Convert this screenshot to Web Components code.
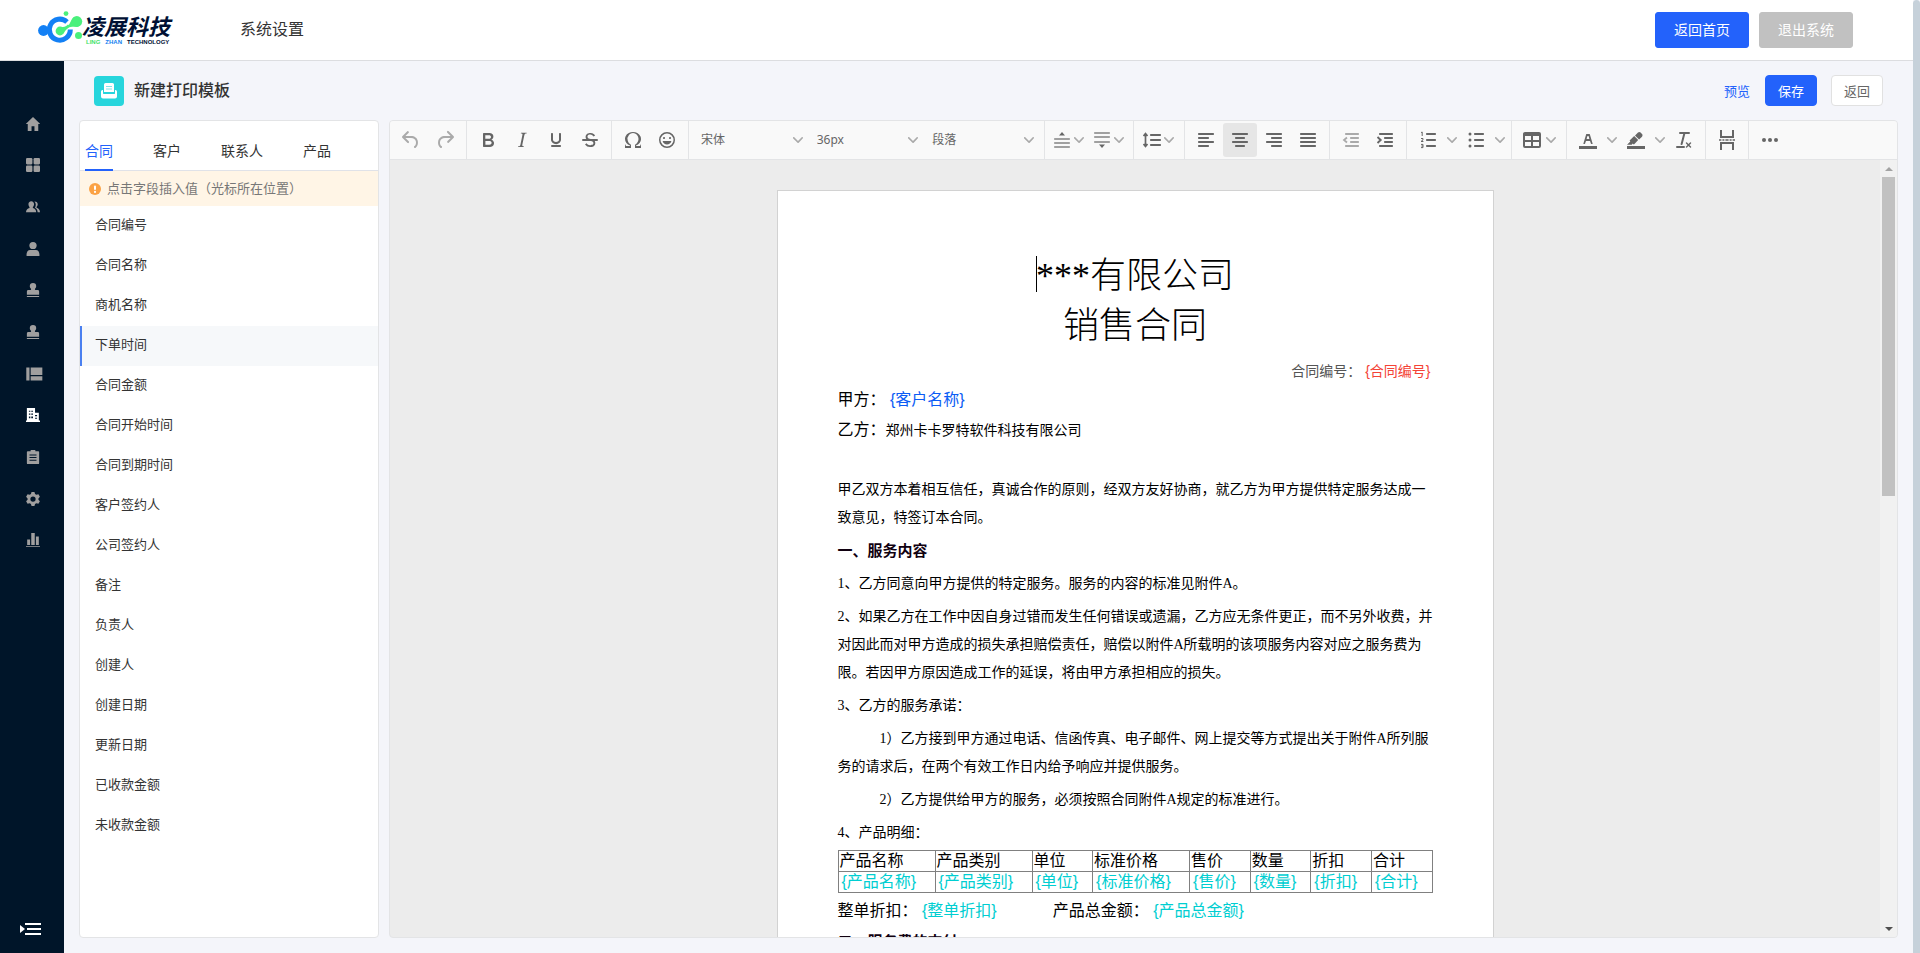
<!DOCTYPE html>
<html lang="zh-CN">
<head>
<meta charset="utf-8">
<title>新建打印模板</title>
<meta name="viewport" content="width=device-width, initial-scale=1">
<style>
  html, body { margin: 0; height: 100%; }
  body {
    font-family: "Noto Sans CJK SC", sans-serif;
    font-size: 13px;
    color: #333;
    background: #f4f5fa;
    overflow: hidden;
    --blue: #2362fb;
    --line: #e3e4e6;
  }
</style>
</head>
<body>
<print-template-app></print-template-app>

<script>
const define = (name, html, setup) => {
  const tpl = document.createElement('template');
  tpl.innerHTML = html;
  customElements.define(name, class extends HTMLElement {
    connectedCallback() {
      if (this.shadowRoot) return;
      this.attachShadow({ mode: 'open' }).append(tpl.content.cloneNode(true));
      if (setup) setup.call(this, this.shadowRoot);
    }
  });
};

/* ---------- icons ---------- */
const bar = (x, y, w) => `<rect x="${x}" y="${y - 1}" width="${w}" height="2" rx=".8"/>`;
const ICONS = {
  undo: '<path d="M6.4 8H12c3.7 0 6.2 2 6.8 5.1.6 2.7-.4 5.6-2.3 6.8a1 1 0 01-1-1.8c1.1-.6 1.8-2.7 1.4-4.6-.5-2.1-2.1-3.5-4.9-3.5H6.4l3.3 3.3a1 1 0 11-1.4 1.4l-5-5a1 1 0 010-1.4l5-5a1 1 0 011.4 1.4L6.4 8z"/>',
  redo: '<path d="M17.6 10H12c-2.8 0-4.4 1.4-4.9 3.5-.4 2 .3 4 1.4 4.6a1 1 0 11-1 1.8c-2-1.2-2.9-4.1-2.3-6.8.6-3 3-5.1 6.8-5.1h5.6l-3.3-3.3a1 1 0 111.4-1.4l5 5a1 1 0 010 1.4l-5 5a1 1 0 01-1.4-1.4l3.3-3.3z"/>',
  bold: '<path d="M7.8 19c-.3 0-.5 0-.6-.2l-.2-.5V5.7c0-.2 0-.4.2-.5l.6-.2h5c1.5 0 2.7.3 3.5 1 .7.6 1.1 1.4 1.1 2.5a3 3 0 01-.6 1.9c-.4.6-1 1-1.6 1.2.4.1.9.3 1.3.6s.8.7 1 1.2c.4.4.5 1 .5 1.6 0 1.3-.4 2.3-1.3 3-.8.7-2.1 1-3.8 1H7.8zm5-8.3c.6 0 1.2-.1 1.6-.5.4-.3.6-.7.6-1.3 0-1.1-.8-1.7-2.3-1.7H9.3v3.5h3.4zm.5 6c.7 0 1.3-.1 1.7-.4.4-.4.6-.9.6-1.5s-.2-1-.7-1.4c-.4-.3-1-.4-2-.4H9.4v3.8h4z"/>',
  italic: '<path d="M16.7 4.7l-.1.9h-.3c-.6 0-1 0-1.4.3-.3.3-.4.6-.5 1.1l-2.1 9.8v.6c0 .5.4.8 1.4.8h.2l-.2.8H8l.2-.8h.2c1.1 0 1.8-.5 2-1.5l2-9.8.1-.5c0-.6-.4-.8-1.4-.8h-.3l.2-.9h5.8z"/>',
  underline: '<path d="M16 5c.6 0 1 .4 1 1v5.5a4 4 0 01-.4 1.8l-1 1.4a5.3 5.3 0 01-5.5 1 5 5 0 01-1.6-1c-.5-.4-.8-.9-1.1-1.4a4 4 0 01-.4-1.8V6c0-.6.4-1 1-1s1 .4 1 1v5.5c0 .3 0 .6.2 1l.6.7a3.3 3.3 0 002.2.8 3.4 3.4 0 002.2-.8c.3-.2.4-.5.6-.8l.2-.9V6c0-.6.4-1 1-1zM8 17h8c.6 0 1 .4 1 1s-.4 1-1 1H8a1 1 0 010-2z"/>',
  strike: '<path d="M15.6 8.5c-.5-.7-1-1.1-1.3-1.3-.6-.4-1.3-.6-2-.6-2.7 0-2.8 1.7-2.8 2.1 0 1.6 1.8 2 3.2 2.3 4.4.9 4.6 2.8 4.6 3.9 0 1.4-.7 4.1-5 4.1A6.2 6.2 0 017 16.4l1.5-1.1c.4.6 1.6 2 3.7 2 1.6 0 2.5-.4 3-1.2.4-.8.3-2-.8-2.6-.7-.4-1.6-.7-2.9-1-1-.2-3.9-.8-3.9-3.6C7.6 6 10.3 5 12.4 5c2.9 0 4.2 1.6 4.7 2.4l-1.5 1.1z"/><path d="M5 11h14a1 1 0 010 2H5a1 1 0 010-2z"/>',
  omega: '<path d="M15 18h4l1-2v4h-6v-3.3l1.4-1a6 6 0 001.8-2.9 6.3 6.3 0 00-.1-4.1 5.8 5.8 0 00-3-3.2c-.6-.3-1.3-.5-2.1-.5a5.1 5.1 0 00-3.9 1.8 6.3 6.3 0 00-1.3 6 6.2 6.2 0 001.8 3l1.4.9V20H4v-4l1 2h4v-.5l-2-1L5.4 15A6.5 6.5 0 014 11c0-1 .2-1.9.6-2.7A7 7 0 017.8 5C9 4.3 10.5 4 12 4c1.7 0 3 .4 4.3 1a7 7 0 013.1 3.3c.4.8.6 1.7.6 2.7 0 1.5-.5 2.8-1.4 4L17 16.5l-2 1v.5z"/>',
  emoji: '<path d="M9 11c.6 0 1-.4 1-1s-.4-1-1-1a1 1 0 00-1 1c0 .6.4 1 1 1zm6 0c.6 0 1-.4 1-1s-.4-1-1-1a1 1 0 00-1 1c0 .6.4 1 1 1zm-3 5.5c2.1 0 4-1.5 4.4-3.5H7.6c.5 2 2.3 3.5 4.4 3.5zM12 4a8 8 0 100 16 8 8 0 000-16zm0 14.5a6.5 6.5 0 110-13 6.5 6.5 0 010 13z"/>',
  before: '<g opacity=".6">' + bar(4, 11, 16) + bar(4, 15, 16) + bar(4, 19, 16) + '</g><path d="M12 4l3 3.6H9z"/>',
  after: '<g opacity=".6">' + bar(4, 5, 16) + bar(4, 9, 16) + bar(4, 14, 16) + '</g><path d="M12 20l3-3.6H9z"/>',
  lineheight: bar(10, 7, 11) + bar(10, 12, 11) + bar(10, 17, 11) + '<path d="M5.5 7v10M3.5 8l2-2.5 2 2.5M3.5 16l2 2.5 2-2.5" fill="none" stroke="currentColor" stroke-width="1.7"/>',
  left: bar(4, 6, 16) + bar(4, 10, 11) + bar(4, 14, 16) + bar(4, 18, 11),
  center: bar(4, 6, 16) + bar(7, 10, 10) + bar(4, 14, 16) + bar(7, 18, 10),
  right: bar(4, 6, 16) + bar(9, 10, 11) + bar(4, 14, 16) + bar(9, 18, 11),
  justify: bar(4, 6, 16) + bar(4, 10, 16) + bar(4, 14, 16) + bar(4, 18, 16),
  outdent: bar(6, 6, 14) + bar(11, 10, 9) + bar(11, 14, 9) + bar(6, 18, 14) + '<path d="M8 9.5L5 12l3 2.5" fill="none" stroke="currentColor" stroke-width="1.8"/>',
  indent: bar(6, 6, 14) + bar(11, 10, 9) + bar(11, 14, 9) + bar(6, 18, 14) + '<path d="M4.5 9l3.2 3-3.2 3" fill="none" stroke="currentColor" stroke-width="1.9"/>',
  ol: bar(10, 6, 10) + bar(10, 12, 10) + bar(10, 18, 10) + '<path d="M5 4.6l1.2-.6v4M5 10.5h2v1.3L5 13.5h2.4M5 16.4h2v3.2H5M5.4 18H7" fill="none" stroke="currentColor" stroke-width="1"/>',
  ul: bar(10, 6, 10) + bar(10, 12, 10) + bar(10, 18, 10) + '<circle cx="6" cy="6" r="1.5"/><circle cx="6" cy="12" r="1.5"/><circle cx="6" cy="18" r="1.5"/>',
  table: '<path d="M19 4a2 2 0 012 2v12a2 2 0 01-2 2H5a2 2 0 01-2-2V6c0-1.1.9-2 2-2h14zM5 14v4h6v-4H5zm14 0h-6v4h6v-4zm0-6h-6v4h6V8zM5 12h6V8H5v4z"/>',
  forecolor: '<path d="M3 18h18v3H3zM8.7 16h-.8a.5.5 0 01-.5-.6l2.7-9c.1-.3.3-.4.5-.4h2.8c.2 0 .4.1.5.4l2.7 9a.5.5 0 01-.5.6h-.8a.5.5 0 01-.4-.4l-.7-2.2c0-.3-.3-.4-.5-.4h-3.4c-.2 0-.4.1-.5.4l-.7 2.2c0 .3-.2.4-.4.4zm2.6-7.6l-.6 2a.5.5 0 00.5.6h1.6a.5.5 0 00.5-.6l-.6-2c0-.3-.3-.4-.5-.4h-.4c-.2 0-.4.1-.5.4z"/>',
  backcolor: '<path d="M3 18h18v3H3zM7.7 16.7H3l3.3-3.3-.7-.8L10.2 8l4 4.1-4 4.2c-.2.2-.6.2-.8 0l-.6-.7-1.1 1.1zm5-7.5L11 7.4l3-2.9a2 2 0 012.6 0L18 6c.7.7.7 2 0 2.7l-2.9 2.9-1.8-1.8-.6-.6z"/>',
  clear: '<path d="M13.2 6a1 1 0 010 .2l-2.6 10a1 1 0 01-1 .8h-.2a.8.8 0 01-.8-1l2.6-10H8a1 1 0 110-2h9a1 1 0 010 2h-3.8zM5 18h7a1 1 0 010 2H5a1 1 0 010-2zm13 1.5L16.5 18 15 19.5a.7.7 0 01-1-1l1.5-1.5-1.5-1.5a.7.7 0 011-1l1.5 1.5 1.5-1.5a.7.7 0 011 1L17.5 17l1.5 1.5a.7.7 0 01-1 1z"/>',
  pagebreak: '<path d="M6 2v7h12V2M6 22v-7h12v7" fill="none" stroke="currentColor" stroke-width="2"/><path d="M4 11.2h2.4v1.6H4zM7.4 11.2h2v1.6h-2zM10.4 11.2h3.2v1.6h-3.2zM14.6 11.2h2v1.6h-2zM17.6 11.2H20v1.6h-2.4z"/>',
  more: '<circle cx="6" cy="12" r="2"/><circle cx="12" cy="12" r="2"/><circle cx="18" cy="12" r="2"/>',
  home: '<path d="M12 0L0 11.500V12h3v12h6.500v-8h5v8H21V12h3v-.5z"/>',
  grid: '<rect width="11" height="11" rx="2"/><rect x="13" width="11" height="11" rx="2"/><rect y="13" width="11" height="11" rx="2"/><rect x="13" y="13" width="11" height="11" rx="2"/>',
  people: '<path d="M9 2c3 0 4.8 2.300 4.800 5.200 0 2-.9 3.600-2 4.700v1.700c3.500 1 5.700 3 5.700 7.400H0c0-4.400 2.500-6.400 6-7.400v-1.700C5 10.800 4.200 9.200 4.200 7.200 4.200 4.300 6 2 9 2z"/><path d="M14.500 2.500c4 0 5.600 2 5.600 4.800 0 2-.8 3.400-2 4.500v1.500c3.400.8 5.700 3 5.900 7.700h-4c-.3-4-1.700-6.300-4.600-7.700 1.700-3.200 2.300-7.500-.9-10.800z"/>',
  person: '<circle cx="12" cy="6" r="6.200"/><path d="M.8 22.500c0-6 2.700-9 6.200-9h10c3.500 0 6.200 3 6.200 9 0 1-.5 1.500-1.500 1.500H2.300c-1 0-1.500-.5-1.500-1.500z"/>',
  stamp: '<path d="M12 0a5.500 5.500 0 015.500 5.500c0 2.200-1.200 3.200-2 4.500-.5 1-.3 2 .5 2h4a2.500 2.500 0 012.500 2.500V20h-21v-5.500A2.500 2.500 0 014 12h4c.8 0 1-1 .5-2-.8-1.300-2-2.300-2-4.500A5.500 5.500 0 0112 0zM1.500 22.300h21V24h-21z"/>',
  layout: '<path d="M.5 1h5.500v22H.5zM8 1h20v12.500H8zM8 16h20v7H8z"/>',
  building: '<path fill-rule="evenodd" d="M1.500 0h14v8H22v13.500h2V24H0v-2.500h1.500zM5 4.500v2h2.500v-2zm4 0v2h3v-2zm-4 5v2h2.500v-2zm4 0v2h3v-2zm-4 5v3h2.500v-3zm4 0v3h3v-3zm6.500-2.500v2H19v-2zm0 4.500v2H19v-2z"/>',
  clip: '<path fill-rule="evenodd" d="M8 0h8v2h5a1.500 1.500 0 011.500 1.500v19A1.500 1.500 0 0121 24H3a1.500 1.500 0 01-1.500-1.500v-19A1.500 1.500 0 013 2h5zM6 7.500v1.800h12V7.500zm0 4.500v1.800h12V12zm0 4.500v1.800h12v-1.800z"/>',
  gear: '<path fill-rule="evenodd" d="M9.500 0h5l1 3.500 2.200 1.300 3.600-.9 2.500 4.300L21.300 11v2.200l2.500 2.600-2.500 4.300-3.600-.9-2.200 1.300-1 3.500h-5l-1-3.500-2.200-1.300-3.600.9L.2 15.800l2.500-2.600V11L.2 8.200l2.500-4.300 3.600.9 2.200-1.300zM12 7.500a4.500 4.500 0 100 9 4.500 4.500 0 000-9z"/>',
  chart: '<path d="M2 11h5v9.500H2zM9 0h6v20.500H9zM17 6h5v14.500h-5zM0 22.500h24V24H0z"/>'
};
const svg = (name, size = 24, box = '0 0 24 24') =>
  `<svg width="${size}" height="${size}" viewBox="${box}" fill="currentColor" aria-hidden="true">${ICONS[name]}</svg>`;
const CHEVRON = '<svg class="chev" width="10" height="10" viewBox="0 0 10 10" fill="currentColor" aria-hidden="true"><path d="M8.7 2.200c.3-.3.8-.3 1 0 .4.400.4.900 0 1.200L5.700 7.800c-.3.300-.9.300-1.200 0L.2 3.400a.8.8 0 010-1.200c.3-.3.8-.3 1.100 0L5 6l3.700-3.800z"/></svg>';

/* ---------- brand ---------- */
define('brand-logo', `
<style>
  :host { display: flex; width: 136px; }
  svg { flex: none; }
  .words { display: flex; flex-direction: column; }
  .name { font-size: 22px; line-height: 24px; font-weight: 700; font-style: italic; color: #001034; white-space: nowrap; margin: 3px 0 1px -2px; }
  .sub { display: flex; gap: 5px; font: bold 6px/8px "Liberation Sans", sans-serif; color: #001034; padding-left: 2px; }
  .sub .g { color: #3fe26a; } .sub .b { color: #1380f0; }
</style>
<svg width="46" height="36" viewBox="0 0 46 36" aria-hidden="true">
  <path d="M29 12A10.500 10.500 0 1 0 32.300 19.500" fill="none" stroke="#1380f5" stroke-width="5"/>
  <circle cx="5.500" cy="20.500" r="5.400" fill="#1380f5"/>
  <path d="M4 18.500h8v4H4z" fill="#1380f5"/>
  <circle cx="28" cy="3.600" r="2.400" fill="#4af07c"/>
  <circle cx="38.800" cy="11.500" r="5.400" fill="#4af07c"/>
  <path d="M30 15.500c2-1 2.500-5.500 6-8.500l4.500 9.500c-4 .5-6.500-.5-10.500 1z" fill="#4af07c"/>
  <path d="M20 17.500c4-1 6 1 10-3l2 2c-3 2.500-5 4-6.500 7z" fill="#4af07c"/>
  <circle cx="22" cy="21" r="4.400" fill="#4af07c"/>
  <circle cx="40.500" cy="25.500" r="3.500" fill="#4af07c"/>
</svg>
<div class="words">
  <div class="name">凌展科技</div>
  <div class="sub"><span class="g">LING</span><span class="b">ZHAN</span><span>TECHNOLOGY</span></div>
</div>`);

define('ui-button', `
<style>
  :host { display: block; }
  button { display: block; box-sizing: border-box; width: 52px; height: 31px; padding: 0; border: 1px solid var(--blue); border-radius: 4px; background: var(--blue); color: #fff; font: 13px/20px "Noto Sans CJK SC", sans-serif; }
  :host([kind=plain]) button { background: #fff; color: #666; border-color: #e1e1e1; }
  :host([size=large]) button { width: 94px; height: 36px; padding-bottom: 2px; font-size: 14px; border-radius: 3px; }
  :host([kind=muted]) button { background: #c1c1c1; border-color: #c1c1c1; }
</style>
<button type="button"><slot></slot></button>`);

define('top-bar', `
<style>
  :host { display: flex; align-items: center; box-sizing: border-box; height: 61px; padding: 0 60px 1px 38px; background: #fff; border-bottom: 1px solid #dcdde0; flex: none; }
  nav { margin: 0 0 4px 66px; }
  a { font-size: 16px; line-height: 24px; color: #333; text-decoration: none; }
  .actions { display: flex; gap: 10px; margin-left: auto; }
  brand-logo { margin-top: -3px; }
</style>
<brand-logo></brand-logo>
<nav><a href="#settings">系统设置</a></nav>
<div class="actions"><ui-button size="large">返回首页</ui-button><ui-button size="large" kind="muted">退出系统</ui-button></div>`);

/* ---------- sidebar ---------- */
define('side-nav', `
<style>
  :host { display: flex; flex-direction: column; justify-content: space-between; width: 64px; flex: none; background: #001529; }
  nav { display: flex; flex-direction: column; height: 458px; margin-top: 42px; }
  a { flex: 1; display: flex; align-items: center; padding-left: 26px; color: #a09f9f; }
  a[aria-current] { color: #fff; }
  svg { overflow: visible; }
  button { border: 0; background: none; padding: 0; width: 22px; height: 14px; margin: 0 0 17px 20px; color: #fff; display: block; }
  button svg { display: block; }
</style>
<nav aria-label="主菜单"></nav>
<button type="button" aria-label="展开菜单"><svg width="22" height="14" viewBox="0 0 22 14" fill="currentColor"><path d="M0 3l5 4-5 4zM5 1h16v2H5zM7 6h14v2H7zM5 11h16v2H5z"/></svg></button>`,
function (root) {
  const items = [['home', '首页'], ['grid', '应用'], ['people', '员工'], ['person', '客户'], ['stamp', '审批'], ['stamp', '流程'], ['layout', '布局'], ['building', '企业'], ['clip', '日志'], ['gear', '设置'], ['chart', '统计']];
  root.querySelector('nav').innerHTML = items.map(([i, t]) =>
    `<a href="#${i}" aria-label="${t}"${i === 'building' ? ' aria-current="page"' : ''}>${svg(i, 14)}</a>`).join('');
});

/* ---------- page heading ---------- */
define('page-heading', `
<style>
  :host { display: flex; align-items: center; height: 31px; padding: 0 15px; }
  .mark { width: 30px; height: 30px; border-radius: 4px; background: #27d5dc; display: grid; place-items: center; }
  h1 { margin: 0 0 4px 10px; font-size: 16px; line-height: 24px; font-weight: 500; color: #333; }
  .actions { display: flex; align-items: center; gap: 14px; margin-left: auto; }
  a { color: var(--blue); text-decoration: none; line-height: 20px; margin-right: 1px; }
</style>
<span class="mark"><svg width="16" height="16" viewBox="0 0 16 16" aria-hidden="true"><path d="M3 1.500A1.500 1.500 0 014.500 0h7A1.500 1.500 0 0113 1.500V9H3z" fill="#fff"/><path d="M5 3.500h6M5 6h6" stroke="#7fe5ea"/><path d="M0 8.500A1.500 1.500 0 011.500 7H2v3.500h12V7h.5A1.500 1.500 0 0116 8.500v5a2 2 0 01-2 2H2a2 2 0 01-2-2z" fill="#fff"/><path d="M2.500 7v3.500h11V7" fill="none" stroke="#27d5dc"/></svg></span>
<h1>新建打印模板</h1>
<div class="actions"><a href="#preview">预览</a><ui-button>保存</ui-button><ui-button kind="plain">返回</ui-button></div>`);

/* ---------- field list ---------- */
define('field-panel', `
<style>
  :host { display: block; box-sizing: border-box; width: 300px; flex: none; background: #fff; border: 1px solid var(--line); border-radius: 4px; overflow: hidden; }
  button { border: 0; background: none; padding: 0; margin: 0; font: inherit; color: #333; text-align: left; }
  .tabs { display: flex; gap: 40px; align-items: flex-end; height: 49px; padding: 0 5px; border-bottom: 1px solid #e0e2e8; }
  .tabs button { font-size: 14px; line-height: 20px; margin-bottom: -1px; padding-bottom: 9px; border-bottom: 2px solid transparent; }
  .tabs button[aria-selected=true] { color: var(--blue); border-color: var(--blue); }
  .tip { display: flex; align-items: center; gap: 6px; height: 35px; padding-left: 9px; background: #fff5e6; color: #777; line-height: 20px; }
  .tip span { padding-bottom: 2px; }
  ul { list-style: none; margin: 0; padding: 0; }
  li button { display: block; width: 100%; height: 40px; box-sizing: border-box; padding: 0 0 4px 15px; line-height: 20px; }
  li button.on { background: #f6f8fa; border-left: 2px solid #4a80f0; padding-left: 13px; }
</style>
<div class="tabs" role="tablist">
  <button role="tab" aria-selected="true">合同</button><button role="tab">客户</button><button role="tab">联系人</button><button role="tab">产品</button>
</div>
<div class="tip"><svg width="12" height="12" viewBox="0 0 12 12" aria-hidden="true"><circle cx="6" cy="6" r="6" fill="#fba245"/><rect x="5" y="2.500" width="2" height="4.600" rx="1" fill="#fff"/><circle cx="6" cy="8.900" r="1.100" fill="#fff"/></svg><span>点击字段插入值（光标所在位置）</span></div>
<ul></ul>`,
function (root) {
  root.querySelector('ul').innerHTML = ['合同编号', '合同名称', '商机名称', '下单时间', '合同金额', '合同开始时间', '合同到期时间', '客户签约人', '公司签约人', '备注', '负责人', '创建人', '创建日期', '更新日期', '已收款金额', '未收款金额']
    .map(t => `<li><button type="button"${t === '下单时间' ? ' class="on"' : ''}>${t}</button></li>`).join('');
});

/* ---------- toolbar ---------- */
define('editor-toolbar', `
<style>
  :host { display: flex; height: 38px; background: #f9f9f9; border-bottom: 1px solid var(--line); color: #666; flex: none; }
  .g { display: flex; align-items: center; padding: 0 4px; border-right: 1px solid var(--line); flex: none; }
  .g:last-child { border: 0; }
  .selects { width: 347px; }
  button { display: flex; align-items: center; justify-content: center; width: 34px; height: 34px; padding: 0; border: 0; border-radius: 3px; background: none; color: inherit; flex: none; box-sizing: border-box; }
  button svg { flex: none; }
  button.on { background: #e6e6e6; }
  button:disabled { color: #aaa; }
  .chev { color: #aaa; }
  .split { display: flex; flex: none; }
  .split button + button { width: 14px; }
  .w40, .w42, .w46 { justify-content: flex-start; }
  .w40 { width: 40px; padding-left: 1px; } .w42 { width: 42px; padding-left: 2px; } .w46 { width: 46px; padding-left: 4px; gap: 2px; }
  label { flex: 1; display: flex; align-items: center; height: 34px; padding-right: 6px; }
  select { appearance: none; border: 0; background: none; flex: 1; min-width: 0; padding: 0 0 0 8px; font: 12px/20px "Noto Sans", "Noto Sans CJK SC", sans-serif; color: #666; }
</style>`,
function (root) {
  const b = (i, t, a = '') => `<button type="button" title="${t}" ${a}>${svg(i)}</button>`;
  const drop = (i, t, w) => `<button type="button" title="${t}" class="${w}">${svg(i)}${CHEVRON}</button>`;
  const split = (i, t) => `<span class="split">${b(i, t)}<button type="button" title="${t}选项">${CHEVRON}</button></span>`;
  const sel = (v, t) => `<label><select aria-label="${t}"><option>${v}</option></select>${CHEVRON}</label>`;
  const groups = [
    b('undo', '撤销', 'disabled') + b('redo', '重做', 'disabled'),
    b('bold', '粗体') + b('italic', '斜体') + b('underline', '下划线') + b('strike', '删除线'),
    b('omega', '特殊字符') + b('emoji', '表情'),
    sel('宋体', '字体') + sel('36px', '字号') + sel('段落', '段落格式'),
    drop('before', '段前距', 'w40') + drop('after', '段后距', 'w40'),
    drop('lineheight', '行高', 'w42'),
    b('left', '左对齐') + b('center', '居中', 'class="on"') + b('right', '右对齐') + b('justify', '两端对齐'),
    b('outdent', '减少缩进', 'disabled') + b('indent', '增加缩进'),
    split('ol', '编号') + split('ul', '项目符号'),
    drop('table', '表格', 'w46'),
    split('forecolor', '文字颜色') + split('backcolor', '背景色') + b('clear', '清除格式'),
    b('pagebreak', '分页符'),
    b('more', '更多')
  ];
  root.innerHTML += groups.map((h, i) => `<div class="g${i === 3 ? ' selects' : ''}">${h}</div>`).join('');
});

/* ---------- document ---------- */
define('scroll-rail', `
<style>
  :host { display: flex; flex-direction: column; width: 17px; flex: none; background: #f1f1f1; }
  .arrow { height: 17px; flex: none; display: grid; place-items: center; color: #a3a3a3; }
  .arrow.down { color: #505050; }
  .track { flex: 1; }
  .thumb { height: 43%; margin: 0 2px; background: #c1c1c1; }
</style>
<div class="arrow"><svg width="8" height="4" viewBox="0 0 8 4" fill="currentColor"><path d="M4 0l4 4H0z"/></svg></div>
<div class="track"><div class="thumb"></div></div>
<div class="arrow down"><svg width="8" height="4" viewBox="0 0 8 4" fill="currentColor"><path d="M4 4l4-4H0z"/></svg></div>`);

define('template-field', `
<style>:host { display: inline; color: #00ced1; font-family: "Liberation Sans", "Noto Sans CJK SC", sans-serif; }</style>{<slot></slot>}`);

define('contract-page', `
<style>
  :host { display: block; box-sizing: border-box; width: 717px; padding: 60px; background: #fff; border: 1px solid #d2d2d2; font: 14px/28px "Liberation Serif", "Noto Sans CJK SC", serif; color: #000; }
  p, h2, h3 { margin: 0 0 5px; font-size: 14px; font-weight: 400; }
  h2 { font-size: 36px; line-height: 50px; font-weight: 300; text-align: center; margin: 0; }
  h3 { font-size: 15px; font-weight: 700; color: #100010; }
  .text { margin-right: -1px; }
  .caret { display: inline-block; width: 1px; height: 36px; margin-right: -1px; background: #000; vertical-align: -4px; }
  .no { text-align: right; color: #555; margin: 6px 2px 0 0; }
  p.party { line-height: 30px; margin: 0; }
  p.big, .big { font-size: 16px; }
  p.first { line-height: 28px; margin-bottom: 1px; }
  .in { text-indent: 3em; }
  .red { color: #f44336; } .blue { color: #0b5cf5; }
  p.lead { margin-bottom: 3px; }
  table { width: 595px; table-layout: fixed; border-collapse: collapse; font-size: 16px; line-height: 18px; margin-bottom: 4px; }
  th, td { border: 1px solid #808080; padding: 1px; font-weight: 400; text-align: left; white-space: nowrap; }
  td { padding-left: 3px; }
  .wide { width: 97px; }
  p.sum { display: flex; gap: 56px; margin-bottom: 3px; }
</style>
<h2><span class="caret"></span>***有限公司</h2>
<h2>销售合同</h2>
<p class="no">合同编号：<template-field class="red">合同编号</template-field></p>
<p class="party first big">甲方：<template-field class="blue">客户名称</template-field></p>
<p class="party"><span class="big">乙方：</span>郑州卡卡罗特软件科技有限公司</p>
<p class="party"><br></p>
<p class="text">甲乙双方本着相互信任，真诚合作的原则，经双方友好协商，就乙方为甲方提供特定服务达成一致意见，特签订本合同。</p>
<h3>一、服务内容</h3>
<p class="text">1、乙方同意向甲方提供的特定服务。服务的内容的标准见附件A。</p>
<p class="text">2、如果乙方在工作中因自身过错而发生任何错误或遗漏，乙方应无条件更正，而不另外收费，并对因此而对甲方造成的损失承担赔偿责任，赔偿以附件A所载明的该项服务内容对应之服务费为限。若因甲方原因造成工作的延误，将由甲方承担相应的损失。</p>
<p class="text">3、乙方的服务承诺：</p>
<p class="text in">1）乙方接到甲方通过电话、信函传真、电子邮件、网上提交等方式提出关于附件A所列服务的请求后，在两个有效工作日内给予响应并提供服务。</p>
<p class="text in">2）乙方提供给甲方的服务，必须按照合同附件A规定的标准进行。</p>
<p class="lead">4、产品明细：</p>
<table>
  <colgroup><col class="wide"><col class="wide"><col><col class="wide"><col><col><col><col></colgroup>
  <thead><tr></tr></thead><tbody><tr></tr></tbody>
</table>
<p class="sum big"><span>整单折扣：<template-field>整单折扣</template-field></span><span>产品总金额：<template-field>产品总金额</template-field></span></p>
<h3>二、服务费的支付</h3>`,
function (root) {
  const cols = ['产品名称', '产品类别', '单位', '标准价格', '售价', '数量', '折扣', '合计'];
  root.querySelector('thead tr').innerHTML = cols.map(c => `<th scope="col">${c}</th>`).join('');
  root.querySelector('tbody tr').innerHTML = cols.map(c => `<td><template-field>${c}</template-field></td>`).join('');
});

define('template-editor', `
<style>
  :host { display: flex; flex-direction: column; flex: 1; min-width: 0; box-sizing: border-box; border: 1px solid var(--line); border-radius: 4px; overflow: hidden; background: #ececec; }
  .body { display: flex; flex: 1; min-height: 0; }
  .canvas { flex: 1; overflow: hidden; padding-top: 30px; }
  contract-page { margin: 0 auto; }
</style>
<editor-toolbar></editor-toolbar>
<div class="body"><div class="canvas"><contract-page></contract-page></div><scroll-rail></scroll-rail></div>`);

define('print-template-app', `
<style>
  :host { display: flex; height: 100vh; }
  .app { flex: 1; min-width: 0; display: flex; flex-direction: column; }
  .work { flex: 1; min-height: 0; display: flex; }
  main { flex: 1; min-width: 0; display: flex; flex-direction: column; gap: 14px; padding: 14px 15px 15px; }
  .cols { flex: 1; min-height: 0; display: flex; gap: 10px; }
  .rail { width: 7px; flex: none; background: #c6d1da; border-radius: 4px 4px 0 0; }
</style>
<div class="app">
  <top-bar></top-bar>
  <div class="work">
    <side-nav></side-nav>
    <main><page-heading></page-heading><div class="cols"><field-panel></field-panel><template-editor></template-editor></div></main>
  </div>
</div>
<div class="rail"></div>`);
</script>
</body>
</html>
